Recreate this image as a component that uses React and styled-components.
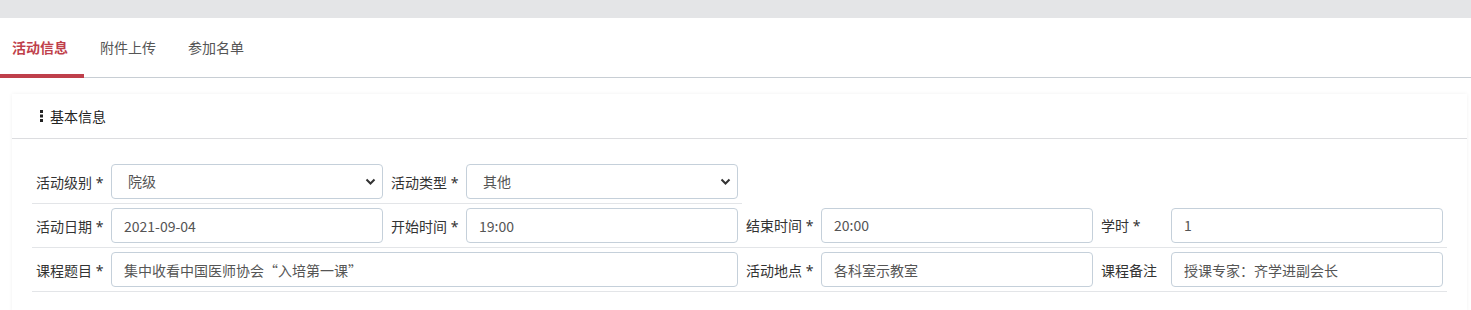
import React from "react";
import styled, { createGlobalStyle } from "styled-components";

const Global = createGlobalStyle`
  html, body { margin: 0; padding: 0; background: #fff; }
  body { font-family: "Noto Sans", "Noto Sans CJK SC", sans-serif; font-size: 14px; color: #333; }
  * { box-sizing: border-box; }
`;

const TopBar = styled.div`
  height: 18px;
  background: #e4e5e7;
`;

const Tabs = styled.div`
  display: flex;
  height: 60px;
  border-bottom: 1px solid #c8ced4;
`;

const Tab = styled.div`
  display: flex;
  align-items: center;
  padding: 0 16px 0 ${(p) => (p.$first ? "12px" : "16px")};
  font-size: 14px;
  color: ${(p) => (p.$active ? "#bf3f4b" : "#555")};
  font-weight: ${(p) => (p.$active ? 600 : 400)};
  border-bottom: 4px solid ${(p) => (p.$active ? "#bf3f4b" : "transparent")};
  margin-bottom: -1px;
  padding-top: 2px;
`;

const Card = styled.div`
  margin: 16px 4px 0 12px;
  background: #fff;
  box-shadow: 0 0 4px rgba(0, 0, 0, 0.06);
`;

const CardHeader = styled.div`
  height: 45px;
  display: flex;
  align-items: center;
  gap: 6px;
  padding-left: 27px;
  border-bottom: 1px solid #dcdde0;
  font-size: 14px;
  color: #222;
`;

const Dots = styled.svg`
  width: 5px;
  height: 14px;
  display: block;
`;

const CardBody = styled.div`
  padding: 21px 20px 20px 20px;
`;

const Table = styled.table`
  width: 100%;
  border-collapse: collapse;
  table-layout: fixed;
`;

const Label = styled.td`
  padding: 4px;
  white-space: nowrap;
  font-size: 14px;
  color: #333;
  vertical-align: middle;
  border-bottom: 1px solid #e3e5e8;
`;

const Field = styled.td`
  padding: 4px;
  vertical-align: middle;
  border-bottom: 1px solid #e3e5e8;
`;

const Input = styled.input`
  display: block;
  width: 100%;
  height: 35px;
  padding: 0 12px;
  border: 1px solid #c5d0da;
  border-radius: 4px;
  font-family: "Noto Sans CJK SC", "Noto Sans", sans-serif;
  font-size: 14px;
  color: #555;
  background: #fff;
  outline: none;
`;

const SelectBox = styled.div`
  position: relative;
  height: 35px;
  border: 1px solid #c5d0da;
  border-radius: 4px;
  background: #fff;
`;

const Select = styled.select`
  appearance: none;
  display: block;
  width: 100%;
  height: 33px;
  padding: 0 30px 0 16px;
  border: none;
  background: transparent;
  font-family: "Noto Sans", "Noto Sans CJK SC", sans-serif;
  font-size: 14px;
  color: #555;
  outline: none;
`;

const Chevron = styled.svg`
  position: absolute;
  right: 6px;
  top: 12px;
  width: 11px;
  height: 9px;
  pointer-events: none;
`;

function SelectField({ value }) {
  return (
    <SelectBox>
      <Select defaultValue={value}>
        <option>{value}</option>
      </Select>
      <Chevron viewBox="0 0 11 9">
        <path d="M1.5 2.5 L5.5 6.5 L9.5 2.5" stroke="#333" strokeWidth="2" fill="none" />
      </Chevron>
    </SelectBox>
  );
}

export default function App() {
  return (
    <>
      <Global />
      <TopBar />
      <Tabs>
        <Tab $active $first>活动信息</Tab>
        <Tab>附件上传</Tab>
        <Tab>参加名单</Tab>
      </Tabs>
      <Card>
        <CardHeader>
          <Dots viewBox="0 0 5 14">
            <rect x="1" y="1" width="3" height="3" fill="#222" />
            <rect x="1" y="5.5" width="3" height="3" fill="#222" />
            <rect x="1" y="10" width="3" height="3" fill="#222" />
          </Dots>
          基本信息
        </CardHeader>
        <CardBody>
          <Table>
            <colgroup>
              <col style={{ width: 75 }} />
              <col />
              <col style={{ width: 75 }} />
              <col />
              <col style={{ width: 75 }} />
              <col />
              <col style={{ width: 70 }} />
              <col />
            </colgroup>
            <tbody>
              <tr>
                <Label>活动级别 *</Label>
                <Field><SelectField value="院级" /></Field>
                <Label>活动类型 *</Label>
                <Field><SelectField value="其他" /></Field>
              </tr>
              <tr>
                <Label>活动日期 *</Label>
                <Field><Input defaultValue="2021-09-04" /></Field>
                <Label>开始时间 *</Label>
                <Field><Input defaultValue="19:00" /></Field>
                <Label>结束时间 *</Label>
                <Field><Input defaultValue="20:00" /></Field>
                <Label>学时 *</Label>
                <Field><Input defaultValue="1" /></Field>
              </tr>
              <tr>
                <Label>课程题目 *</Label>
                <Field colSpan={3}><Input defaultValue="集中收看中国医师协会“入培第一课”" /></Field>
                <Label>活动地点 *</Label>
                <Field><Input defaultValue="各科室示教室" /></Field>
                <Label>课程备注</Label>
                <Field><Input defaultValue="授课专家：齐学进副会长" /></Field>
              </tr>
            </tbody>
          </Table>
        </CardBody>
      </Card>
    </>
  );
}
